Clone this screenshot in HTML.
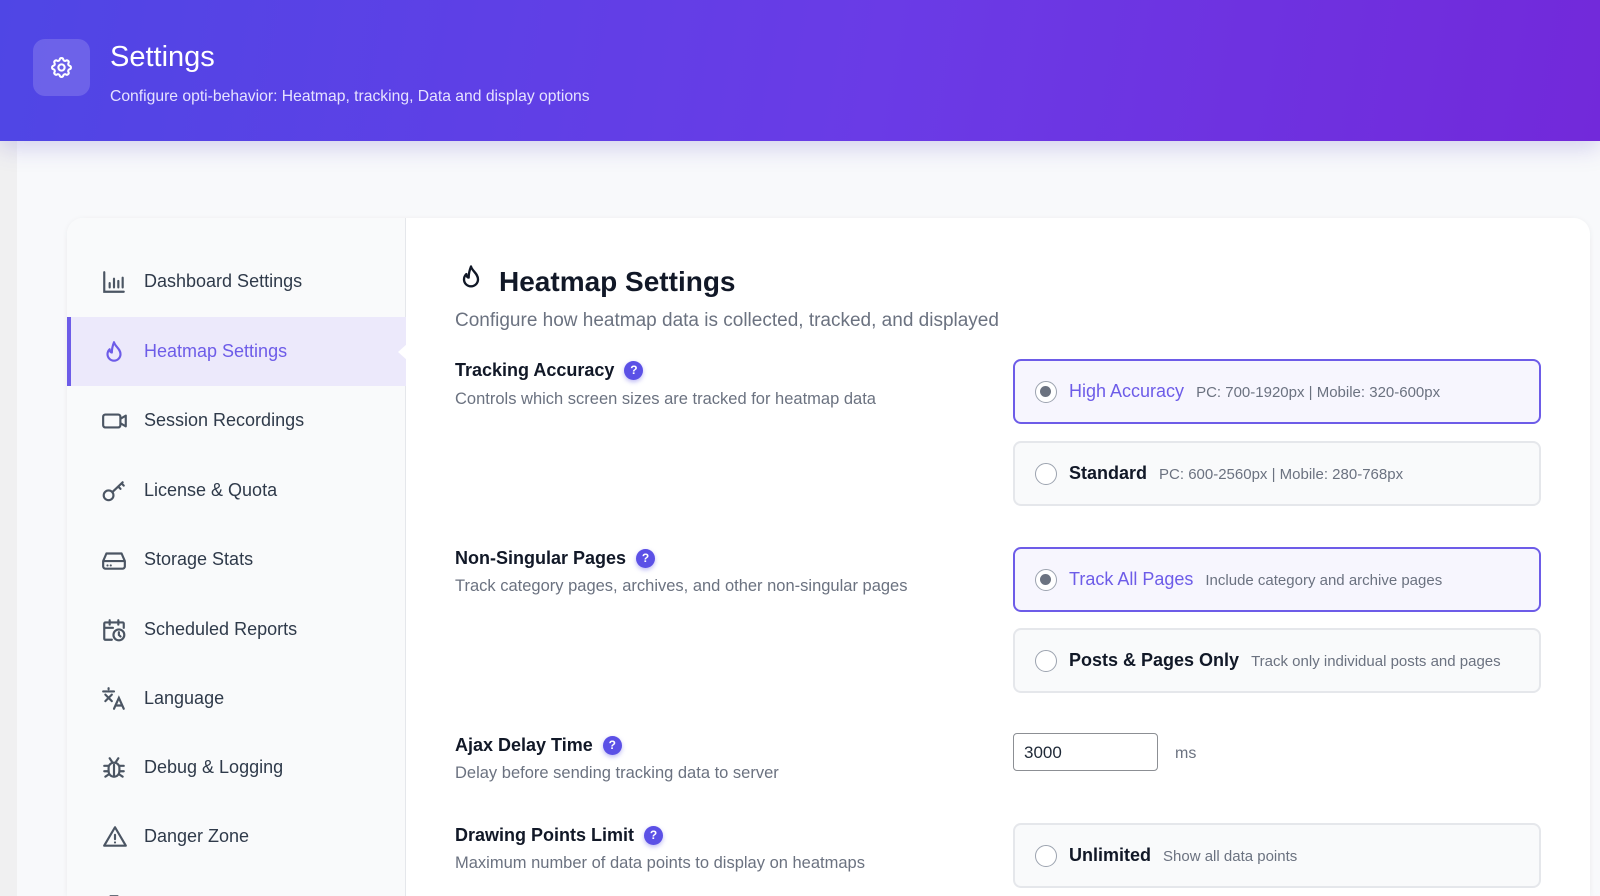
<!DOCTYPE html>
<html><head><meta charset="utf-8">
<style>
*{box-sizing:border-box;margin:0;padding:0}
html,body{width:1600px;height:896px;overflow:hidden}
body{font-family:"Liberation Sans",sans-serif;background:#f0f0f1;position:relative}
.wrap{position:absolute;left:17px;top:0;right:0;bottom:0;background:#f8f9fb}
.hdr{position:absolute;left:0;top:0;width:1600px;height:141px;background:linear-gradient(100deg,#4f46e5 0%,#6a3be6 55%,#7229da 100%);box-shadow:0 6px 22px rgba(90,80,200,.25)}
.hicon{position:absolute;left:33px;top:39px;width:57px;height:57px;border-radius:12px;background:rgba(255,255,255,.16)}
.hicon svg{position:absolute;left:16px;top:16px}
.htitle{position:absolute;left:110px;top:41px;color:#fff;font-size:29px}
.hsub{position:absolute;left:110px;top:88px;color:#e6e2ff;font-size:15.7px}
.card{position:absolute;left:67px;top:218px;width:1523px;height:678px;background:#fff;border-radius:16px 16px 0 0;box-shadow:0 1px 6px rgba(0,0,0,.06);overflow:hidden}
.side{position:absolute;left:0;top:0;width:339px;height:100%;background:#f9fafb;border-right:1px solid #e5e7eb}
.nav{position:absolute;left:0;width:339px;height:69px;display:flex;align-items:center;color:#2f3a4a;font-size:18px}
.nav svg{position:absolute;left:34px}
.nav span{position:absolute;left:77px}
.nav.act{background:#ece9fb;color:#6d5ce8;border-left:4px solid #6d5ce8}
.nav.act svg{left:30px}.nav.act span{left:73px}
.arrow{position:absolute;right:-1px;top:27px;width:0;height:0;border-top:8px solid transparent;border-bottom:8px solid transparent;border-right:9px solid #fff}
.m{position:absolute;color:#111827}
.h1{left:432px;top:48px;font-size:28px;font-weight:bold}
.sub{left:388px;top:92px;font-size:19px;color:#6b7280}
.lbl{left:388px;font-size:18px;font-weight:bold;display:flex;align-items:center}
.q{display:inline-block;width:19px;height:19px;border-radius:50%;background:#5b50e6;color:#fff;font-size:12px;text-align:center;line-height:19px;margin-left:10px;box-shadow:0 2px 5px rgba(91,80,230,.4)}
.desc{left:388px;font-size:16.5px;color:#6b7280}
.opt{position:absolute;left:946px;width:528px;height:65px;border:2px solid #e5e7eb;background:#f9fafb;border-radius:8px;display:flex;align-items:center}
.opt.sel{border-color:#6d5ce8;background:#f7f6fe}
.rad{position:absolute;left:20px;top:20px;width:22px;height:22px;border-radius:50%;border:1.5px solid #9ca3af;background:#fff}
.sel .rad:after{content:"";position:absolute;left:4px;top:4px;width:11px;height:11px;border-radius:50%;background:#6b7280}
.ot{position:absolute;left:54px;font-size:18px;color:#111827;font-weight:bold;white-space:nowrap}
.sel .ot{color:#6d5ce8;font-weight:normal}
.ot small{font-size:15px;color:#6b7280;font-weight:normal;margin-left:12px}
.inp{position:absolute;left:946px;top:515px;width:145px;height:38px;border:1px solid #8c8f94;border-radius:4px;font-size:17px;padding:9px 10px;color:#1f2937}
</style></head><body>
<div class="wrap"></div>
<div class="hdr">
 <div class="hicon"><svg width="25" height="25" viewBox="0 0 24 24" fill="none" stroke="#fff" stroke-width="2" stroke-linecap="round" stroke-linejoin="round"><path d="M10.3 4.3c.4-1.8 3-1.8 3.4 0a1.7 1.7 0 0 0 2.6 1.1c1.5-.9 3.3.8 2.4 2.4a1.7 1.7 0 0 0 1 2.5c1.8.4 1.8 3 0 3.4a1.7 1.7 0 0 0-1 2.6c.9 1.5-.9 3.3-2.4 2.4a1.7 1.7 0 0 0-2.6 1c-.4 1.8-3 1.8-3.4 0a1.7 1.7 0 0 0-2.6-1c-1.5.9-3.3-.9-2.4-2.4a1.7 1.7 0 0 0-1-2.6c-1.8-.4-1.8-3 0-3.4a1.7 1.7 0 0 0 1-2.5c-.9-1.6.9-3.3 2.4-2.4a1.7 1.7 0 0 0 2.6-1.1z"/><circle cx="12" cy="12" r="3"/></svg></div>
 <div class="htitle">Settings</div>
 <div class="hsub">Configure opti-behavior: Heatmap, tracking, Data and display options</div>
</div>
<div class="card">
 <div class="side">
  <div class="nav" style="top:29px"><svg width="26" height="26" viewBox="0 0 24 24" fill="none" stroke="#4b5563" stroke-width="2" stroke-linecap="round"><path d="M3 3v18h18M8 17v-4M12 17V9M16 17v-6M20 17V8"/></svg><span>Dashboard Settings</span></div>
  <div class="nav act" style="top:99px"><svg width="26" height="26" viewBox="0 0 24 24" fill="none" stroke="#6d5ce8" stroke-width="2" stroke-linejoin="round"><path d="M12 3c1 4 6 6 6 11a6 6 0 0 1-12 0c0-2 1-3.5 2-4.5 0 2 1 3 2 3 0-4 1-7 2-9.5z"/></svg><span>Heatmap Settings</span><div class="arrow"></div></div>
  <div class="nav" style="top:168px"><svg width="28" height="26" viewBox="0 0 26 24" fill="none" stroke="#4b5563" stroke-width="2" stroke-linejoin="round"><rect x="2" y="6" width="16" height="12" rx="2"/><path d="M18 10l5-3v10l-5-3"/></svg><span>Session Recordings</span></div>
  <div class="nav" style="top:238px"><svg width="26" height="26" viewBox="0 0 24 24" fill="none" stroke="#4b5563" stroke-width="2" stroke-linecap="round"><circle cx="7" cy="16" r="4.5"/><path d="M10.5 13L20 4M16 8l2 2M19 5l2 2"/></svg><span>License &amp; Quota</span></div>
  <div class="nav" style="top:307px"><svg width="26" height="26" viewBox="0 0 24 24" fill="none" stroke="#4b5563" stroke-width="2" stroke-linejoin="round"><path d="M2 13l3-7h14l3 7v5a2 2 0 0 1-2 2H4a2 2 0 0 1-2-2z M2 13h20"/><path d="M6 17h.01M9 17h.01" stroke-linecap="round"/></svg><span>Storage Stats</span></div>
  <div class="nav" style="top:377px"><svg width="26" height="26" viewBox="0 0 24 24" fill="none" stroke="#4b5563" stroke-width="2" stroke-linecap="round"><path d="M10 21H4a1 1 0 0 1-1-1V6a1 1 0 0 1 1-1h16a1 1 0 0 1 1 1v4M8 3v4M16 3v4M3 10h8"/><circle cx="16.5" cy="16.5" r="5"/><path d="M16.5 14v2.5l1.5 1.5"/></svg><span>Scheduled Reports</span></div>
  <div class="nav" style="top:446px"><svg width="26" height="26" viewBox="0 0 24 24" fill="none" stroke="#4b5563" stroke-width="2" stroke-linecap="round"><path d="M2 5h10M7 2v1M4 8l6 6M10 8l-6 6M12 21l4.5-10 4.5 10M13.5 18h6"/></svg><span>Language</span></div>
  <div class="nav" style="top:515px"><svg width="26" height="26" viewBox="0 0 24 24" fill="none" stroke="#4b5563" stroke-width="2" stroke-linecap="round"><path d="M8 3l2 3M16 3l-2 3"/><rect x="7" y="7" width="10" height="13" rx="5"/><path d="M12 9v11M3 10h4M17 10h4M3 15h4M17 15h4M4 20l3-2M20 20l-3-2"/></svg><span>Debug &amp; Logging</span></div>
  <div class="nav" style="top:584px"><svg width="28" height="26" viewBox="0 0 24 24" fill="none" stroke="#4b5563" stroke-width="2" stroke-linecap="round" stroke-linejoin="round"><path d="M12 3L2 20h20z"/><path d="M12 10v4M12 17h.01"/></svg><span>Danger Zone</span></div>
  <div class="nav" style="top:653px"><svg width="26" height="26" viewBox="0 0 24 24" fill="none" stroke="#4b5563" stroke-width="2"><path d="M8 3h8"/></svg><span></span></div>
 </div>
 <svg class="m" style="left:390px;top:44px" width="28" height="30" viewBox="0 0 24 24" fill="none" stroke="#111827" stroke-width="2" stroke-linejoin="round"><path d="M12 3c1 4 6 6 6 11a6 6 0 0 1-12 0c0-2 1-3.5 2-4.5 0 2 1 3 2 3 0-4 1-7 2-9.5z"/></svg>
 <div class="m h1">Heatmap Settings</div>
 <div class="m sub">Configure how heatmap data is collected, tracked, and displayed</div>

 <div class="m lbl" style="top:142px">Tracking Accuracy<span class="q">?</span></div>
 <div class="m desc" style="top:172px">Controls which screen sizes are tracked for heatmap data</div>
 <div class="opt sel" style="top:141px"><div class="rad"></div><div class="ot">High Accuracy<small>PC: 700-1920px | Mobile: 320-600px</small></div></div>
 <div class="opt" style="top:223px"><div class="rad"></div><div class="ot">Standard<small>PC: 600-2560px | Mobile: 280-768px</small></div></div>

 <div class="m lbl" style="top:330px">Non-Singular Pages<span class="q">?</span></div>
 <div class="m desc" style="top:359px">Track category pages, archives, and other non-singular pages</div>
 <div class="opt sel" style="top:329px"><div class="rad"></div><div class="ot">Track All Pages<small>Include category and archive pages</small></div></div>
 <div class="opt" style="top:410px"><div class="rad"></div><div class="ot">Posts &amp; Pages Only<small>Track only individual posts and pages</small></div></div>

 <div class="m lbl" style="top:517px">Ajax Delay Time<span class="q">?</span></div>
 <div class="m desc" style="top:546px">Delay before sending tracking data to server</div>
 <div class="inp">3000</div>
 <div class="m" style="left:1108px;top:527px;font-size:16px;color:#6b7280">ms</div>

 <div class="m lbl" style="top:607px">Drawing Points Limit<span class="q">?</span></div>
 <div class="m desc" style="top:636px">Maximum number of data points to display on heatmaps</div>
 <div class="opt" style="top:605px"><div class="rad"></div><div class="ot">Unlimited<small>Show all data points</small></div></div>
</div>
</body></html>
